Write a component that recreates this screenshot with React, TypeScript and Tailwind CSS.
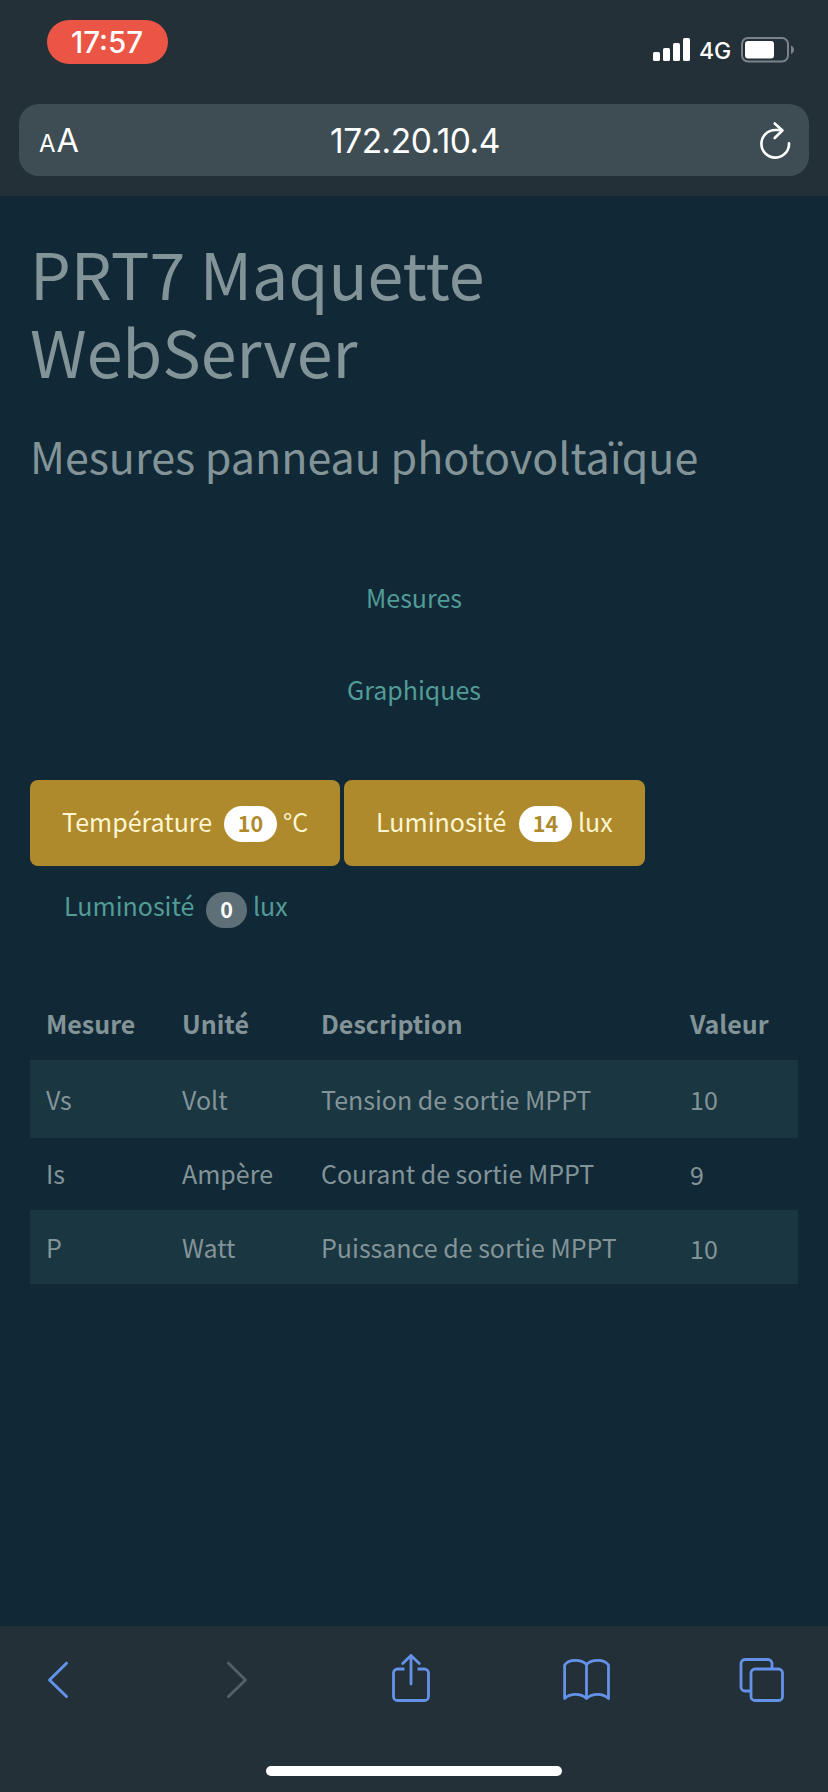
import type { ReactNode } from 'react';

const rows = [
  { mesure: 'Vs', unite: 'Volt', description: 'Tension de sortie MPPT', valeur: '10', row: 'bg-[#1a3640] leading-[78px]', cell: '' },
  { mesure: 'Is', unite: 'Ampère', description: 'Courant de sortie MPPT', valeur: '9', row: 'h-[72px] leading-[70px]', cell: 'leading-[72px]' },
  { mesure: 'P', unite: 'Watt', description: 'Puissance de sortie MPPT', valeur: '10', row: 'h-[74px] bg-[#1a3640] leading-[74px]', cell: 'leading-[76px]' },
];

const grid = 'grid grid-cols-[136px_139px_369px_1fr] pl-4';

function StatusBar() {
  return (
    <div className="flex h-[104px] items-start justify-between pl-[46.5px] pr-[33px] text-white">
      <div className="mt-5 flex h-11 w-[121px] items-center justify-center rounded-[22px] bg-[#eb5545] text-[29.5px] font-medium leading-[45px]">
        17:57
      </div>
      <div className="mt-[34px] flex h-8 items-center">
        <svg width="38" height="24" viewBox="0 0 38 24" fill="currentColor">
          <rect x="0" y="14" width="7" height="9" rx="1.6" />
          <rect x="10" y="10" width="7" height="13" rx="1.6" />
          <rect x="20" y="5" width="7" height="18" rx="1.6" />
          <rect x="30" y="0" width="7" height="23" rx="1.6" />
        </svg>
        <span className="ml-2 w-[34px] pt-[3px] text-[23px] font-medium leading-[29px]">4G</span>
        <svg className="ml-[8px]" width="54" height="26" viewBox="0 0 54 26">
          <rect x="1" y="1" width="46" height="23.5" rx="6" fill="none" stroke="#7b8388" strokeWidth="2" />
          <rect x="4" y="4" width="29" height="17.5" rx="3" fill="#fff" />
          <path d="M50 8.5c4 1.4 4 7.1 0 8.5z" fill="#7b8388" />
        </svg>
      </div>
    </div>
  );
}

function AddressBar() {
  return (
    <div className="mx-[19px] flex h-[72px] items-center justify-between rounded-[20px] bg-[#3e4d54] pl-[20px] pr-[18px] text-white">
      <div className="flex w-16 items-baseline gap-px pt-[5px] leading-[72px]">
        <span className="text-[24px]">A</span>
        <span className="text-[32.5px]">A</span>
      </div>
      <span className="pt-[2px] text-[33.5px] leading-[72px] tracking-[-0.5px]">172.20.10.4</span>
      <div className="flex w-16 justify-end">
        <svg width="32" height="38" viewBox="0 0 32 38" fill="none" stroke="currentColor" strokeWidth="2.6" strokeLinecap="round" strokeLinejoin="round">
          <path d="M30 22.2A13.8 13.8 0 1 1 16.2 9H23" />
          <path d="M15.700 2.500 23.400 9.500 15.700 17" />
        </svg>
      </div>
    </div>
  );
}

function Badge({ className, children }: { className: string; children: ReactNode }) {
  return (
    <span className={`flex h-9 items-center justify-center rounded-[18px] pb-[2px] text-[21.5px] font-bold leading-[34px] ${className}`}>
      {children}
    </span>
  );
}

export default function App() {
  return (
    <div className="flex h-[1792px] w-[828px] flex-col bg-[#112936] font-['Noto_Sans_CJK_JP',sans-serif]">
      <header className="h-[196px] bg-[#233037] font-['Inter',sans-serif]">
        <StatusBar />
        <AddressBar />
      </header>

      <main className="flex-1 px-[30px] pt-[37px] text-[25px] text-[#839499]">
        <h1 className="text-[64.5px] leading-[78px]">
          PRT7 Maquette
          <br />
          WebServer
        </h1>
        <h2 className="mt-9 text-[43px] leading-[60px]">Mesures panneau photovoltaïque</h2>

        <nav className="mt-[66px] flex flex-col items-center leading-[92px] text-[#529c97]">
          <a>Mesures</a>
          <a>Graphiques</a>
        </nav>

        <div className="mt-[45px] flex gap-1 leading-[82px] text-[#fdf6d3]">
          <button className="flex h-[86px] w-[310px] rounded-lg bg-[#ae8a2d] pl-[32px]">
            <span className="w-[162px] text-left">Température</span>
            <Badge className="mt-[26px] w-[53px] bg-white text-[#ae8a2d]">10</Badge>
            <span className="ml-[6px]">°C</span>
          </button>
          <button className="flex h-[86px] w-[301px] rounded-lg bg-[#ae8a2d] pl-[32px]">
            <span className="w-[143px] text-left">Luminosité</span>
            <Badge className="mt-[26px] w-[53px] bg-white text-[#ae8a2d]">14</Badge>
            <span className="ml-[6px]">lux</span>
          </button>
        </div>
        <div className="flex h-[121px] pl-[34px] leading-[78px] text-[#529c97]">
          <span className="w-[142px]">Luminosité</span>
          <Badge className="mt-[26px] w-[41px] bg-[#5f6f78] text-white">0</Badge>
          <span className="ml-[6px]">lux</span>
        </div>

        <section>
          <div className={`${grid} font-bold leading-[73px]`}>
            <span>Mesure</span>
            <span>Unité</span>
            <span>Description</span>
            <span>Valeur</span>
          </div>
          {rows.map((r) => (
            <div key={r.mesure} className={`${grid} ${r.row}`}>
              <span>{r.mesure}</span>
              <span>{r.unite}</span>
              <span>{r.description}</span>
              <span className={r.cell}>{r.valeur}</span>
            </div>
          ))}
        </section>
      </main>

      <footer className="flex h-[166px] flex-col items-center bg-[#233037]">
        <div className="flex h-[140px] w-full pl-[46px] pt-[26px] text-[#6492e9]">
          <svg width="24" height="52" viewBox="0 0 24 52" fill="none" stroke="currentColor" strokeWidth="3" strokeLinecap="round" strokeLinejoin="round">
            <path d="M20.500 11.200 3.500 28 20.500 44.500" />
          </svg>
          <svg className="ml-[155px] text-[#555f65]" width="24" height="52" viewBox="0 0 24 52" fill="none" stroke="currentColor" strokeWidth="3" strokeLinecap="round" strokeLinejoin="round">
            <path d="M3.500 11.200 20.500 28 3.500 44.500" />
          </svg>
          <svg className="ml-[142px]" width="40" height="52" viewBox="0 0 40 52" fill="none" stroke="currentColor" strokeWidth="2.8" strokeLinecap="butt" strokeLinejoin="round">
            <path d="M13.500 17H6.500a4 4 0 0 0-4 4v23.500a4 4 0 0 0 4 4h27a4 4 0 0 0 4-4V21a4 4 0 0 0-4-4H26.500" />
            <path d="M20 32V3.500M11.700 11.500 20 3.500l8.300 8" strokeLinecap="round" />
          </svg>
          <svg className="ml-[132px]" width="48" height="52" viewBox="0 0 48 52" fill="none" stroke="currentColor" strokeWidth="2.8" strokeLinecap="round" strokeLinejoin="round">
            <path d="M23.500 12.500C18 7 6 7 1.600 13v33.500c6-5.500 15.900-5.500 21.900 0 6-5.500 16-5.500 22 0V13C41 7 29 7 23.500 12.500v34" />
          </svg>
          <svg className="ml-[127px]" width="48" height="52" viewBox="0 0 48 52" fill="none" stroke="currentColor" strokeWidth="2.8" strokeLinejoin="round">
            <rect x="13" y="17" width="31.500" height="31.500" rx="4" />
            <path d="M34 17v-5.500a4 4 0 0 0-4-4H7a4 4 0 0 0-4 4V35a4 4 0 0 0 4 4h6" />
          </svg>
        </div>
        <div className="h-[10px] w-[296px] rounded-full bg-white" />
      </footer>
    </div>
  );
}
